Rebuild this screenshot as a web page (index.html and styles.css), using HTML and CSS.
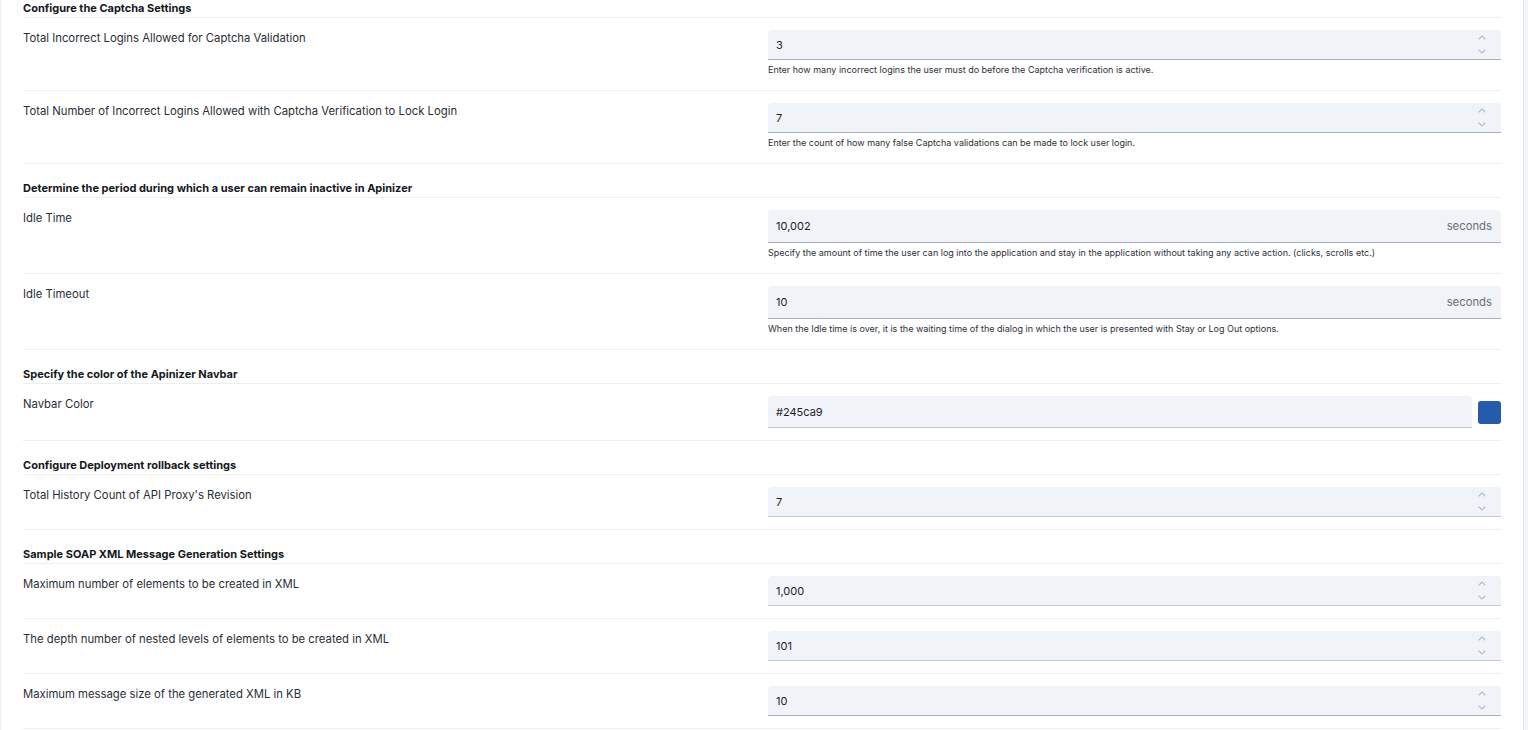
FILE: index.html
```html
<!DOCTYPE html>
<html lang="en">
<head>
<meta charset="utf-8">
<title>Settings</title>
<link rel="stylesheet" href="styles.css">
</head>
<body>
<div class="page">
  <main class="content">

    <section class="section">
      <h2 class="section-title">Configure the Captcha Settings</h2>
      <div class="row">
        <div class="label">Total Incorrect Logins Allowed for Captcha Validation</div>
        <div class="control">
          <div class="field">
            <span class="value">3</span>
            <span class="spin"><svg width="8" height="5" viewBox="0 0 8 5"><path d="M1 4 L4 1 L7 4" /></svg><svg width="8" height="5" viewBox="0 0 8 5"><path d="M1 1 L4 4 L7 1" /></svg></span>
          </div>
          <div class="help">Enter how many incorrect logins the user must do before the Captcha verification is active.</div>
        </div>
      </div>
      <div class="row">
        <div class="label">Total Number of Incorrect Logins Allowed with Captcha Verification to Lock Login</div>
        <div class="control">
          <div class="field">
            <span class="value">7</span>
            <span class="spin"><svg width="8" height="5" viewBox="0 0 8 5"><path d="M1 4 L4 1 L7 4" /></svg><svg width="8" height="5" viewBox="0 0 8 5"><path d="M1 1 L4 4 L7 1" /></svg></span>
          </div>
          <div class="help">Enter the count of how many false Captcha validations can be made to lock user login.</div>
        </div>
      </div>
    </section>

    <section class="section">
      <h2 class="section-title">Determine the period during which a user can remain inactive in Apinizer</h2>
      <div class="row">
        <div class="label">Idle Time</div>
        <div class="control">
          <div class="field field-tall">
            <span class="value">10,002</span>
            <span class="suffix">seconds</span>
          </div>
          <div class="help">Specify the amount of time the user can log into the application and stay in the application without taking any active action. (clicks, scrolls etc.)</div>
        </div>
      </div>
      <div class="row">
        <div class="label">Idle Timeout</div>
        <div class="control">
          <div class="field field-tall">
            <span class="value">10</span>
            <span class="suffix">seconds</span>
          </div>
          <div class="help">When the Idle time is over, it is the waiting time of the dialog in which the user is presented with Stay or Log Out options.</div>
        </div>
      </div>
    </section>

    <section class="section">
      <h2 class="section-title">Specify the color of the Apinizer Navbar</h2>
      <div class="row">
        <div class="label">Navbar Color</div>
        <div class="control color-control">
          <div class="field field-color">
            <span class="value">#245ca9</span>
          </div>
          <span class="swatch"></span>
        </div>
      </div>
    </section>

    <section class="section">
      <h2 class="section-title">Configure Deployment rollback settings</h2>
      <div class="row">
        <div class="label">Total History Count of API Proxy's Revision</div>
        <div class="control">
          <div class="field field-light">
            <span class="value">7</span>
            <span class="spin"><svg width="8" height="5" viewBox="0 0 8 5"><path d="M1 4 L4 1 L7 4" /></svg><svg width="8" height="5" viewBox="0 0 8 5"><path d="M1 1 L4 4 L7 1" /></svg></span>
          </div>
        </div>
      </div>
    </section>

    <section class="section">
      <h2 class="section-title">Sample SOAP XML Message Generation Settings</h2>
      <div class="row">
        <div class="label">Maximum number of elements to be created in XML</div>
        <div class="control">
          <div class="field field-light">
            <span class="value">1,000</span>
            <span class="spin"><svg width="8" height="5" viewBox="0 0 8 5"><path d="M1 4 L4 1 L7 4" /></svg><svg width="8" height="5" viewBox="0 0 8 5"><path d="M1 1 L4 4 L7 1" /></svg></span>
          </div>
        </div>
      </div>
      <div class="row">
        <div class="label">The depth number of nested levels of elements to be created in XML</div>
        <div class="control">
          <div class="field field-light">
            <span class="value">101</span>
            <span class="spin"><svg width="8" height="5" viewBox="0 0 8 5"><path d="M1 4 L4 1 L7 4" /></svg><svg width="8" height="5" viewBox="0 0 8 5"><path d="M1 1 L4 4 L7 1" /></svg></span>
          </div>
        </div>
      </div>
      <div class="row">
        <div class="label">Maximum message size of the generated XML in KB</div>
        <div class="control">
          <div class="field">
            <span class="value">10</span>
            <span class="spin"><svg width="8" height="5" viewBox="0 0 8 5"><path d="M1 4 L4 1 L7 4" /></svg><svg width="8" height="5" viewBox="0 0 8 5"><path d="M1 1 L4 4 L7 1" /></svg></span>
          </div>
        </div>
      </div>
    </section>

  </main>
  <div class="scroll-strip"></div>
</div>
</body>
</html>
```

FILE: styles.css
```css
* { box-sizing: border-box; }

html, body {
  margin: 0;
  padding: 0;
  background: #ffffff;
  height: 100%;
  overflow: hidden;
}

body {
  font-family: Inter, "Noto Sans", "Liberation Sans", sans-serif;
  color: #262a33;
}

.page {
  display: flex;
  height: 730px;
}

.content {
  flex: 1;
  padding: 0 22px 0 22px;
  border-left: 1px solid #eef0f3;
}

.scroll-strip {
  width: 5px;
  background: #f4f5f8;
  border-left: 1px solid #e4e6eb;
}

.section + .section { margin-top: 16px; }

.section-title {
  margin: 0;
  font-size: 11px;
  font-weight: 700;
  line-height: 16px;
  color: #15171c;
  padding-bottom: 1px;
  border-bottom: 1px solid #eceef1;
}

.row {
  display: grid;
  grid-template-columns: 1fr 733px;
  column-gap: 12px;
  padding: 12px 0;
  border-bottom: 1px solid #eceef1;
}

.label {
  font-size: 11.3px;
  line-height: 16px;
  color: #2a2e37;
}

.control { display: flex; flex-direction: column; }

.field {
  display: flex;
  align-items: center;
  height: 30px;
  padding: 0 15px 0 8px;
  background: #f0f3f8;
  border-bottom: 1.5px solid #a8afbf;
  border-radius: 4px 4px 0 0;
}

.field-light { border-bottom-color: #c3c8d3; }

.field-tall { height: 33px; padding-right: 9px; }

.value {
  flex: 1;
  font-size: 11px;
  color: #1e2128;
}

.suffix {
  font-size: 11.3px;
  color: #6b6f78;
}

.spin {
  display: flex;
  flex-direction: column;
  gap: 8.5px;
}

.spin svg { display: block; }

.spin path {
  fill: none;
  stroke: #b5bbca;
  stroke-width: 1.1;
  stroke-linecap: round;
  stroke-linejoin: round;
}

.help {
  padding-top: 2px;
  font-size: 9px;
  line-height: 16px;
  color: #2d3038;
}

.color-control {
  flex-direction: row;
  align-items: center;
  gap: 6px;
}

.field-color {
  flex: 1;
  height: 32px;
  border-bottom-color: #c4c8d2;
}

.swatch {
  width: 23px;
  height: 23px;
  border-radius: 3px;
  background: #245ca9;
}
```
